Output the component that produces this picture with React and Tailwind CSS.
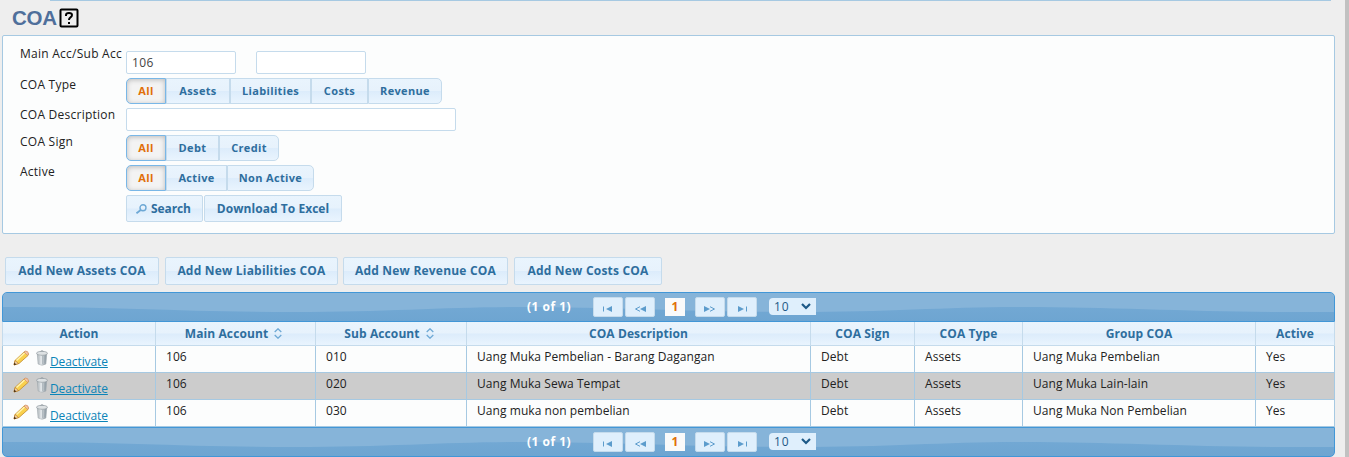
import React from "react";

const FONT = "font-['Open_Sans','Noto_Sans',sans-serif]";
const GLOSS = "bg-[linear-gradient(#e9f4fd_0%,#e7f2fc_49%,#dcecfb_51%,#e9f4fe_100%)]";
const BTN = `${GLOSS} border border-[#c5dbec] text-[#2e6e9e] font-bold`;

const COLUMNS = [
  { label: "Action", width: "w-[153px]" },
  { label: "Main Account", width: "w-[160px]", sortable: true },
  { label: "Sub Account", width: "w-[151px]", sortable: true },
  { label: "COA Description", width: "w-[344px]" },
  { label: "COA Sign", width: "w-[104px]" },
  { label: "COA Type", width: "w-[108px]" },
  { label: "Group COA", width: "w-[233px]" },
  { label: "Active", width: "w-[79px]" },
];

const ROWS = [
  ["106", "010", "Uang Muka Pembelian - Barang Dagangan", "Debt", "Assets", "Uang Muka Pembelian", "Yes"],
  ["106", "020", "Uang Muka Sewa Tempat", "Debt", "Assets", "Uang Muka Lain-lain", "Yes"],
  ["106", "030", "Uang muka non pembelian", "Debt", "Assets", "Uang Muka Non Pembelian", "Yes"],
];

const TYPES = [
  { label: "All", width: "w-[40px]" },
  { label: "Assets", width: "w-[64px]" },
  { label: "Liabilities", width: "w-[81px]" },
  { label: "Costs", width: "w-[57px]" },
  { label: "Revenue", width: "w-[74px]" },
];
const SIGNS = [
  { label: "All", width: "w-[40px]" },
  { label: "Debt", width: "w-[53px]" },
  { label: "Credit", width: "w-[60px]" },
];
const STATES = [
  { label: "All", width: "w-[40px]" },
  { label: "Active", width: "w-[61px]" },
  { label: "Non Active", width: "w-[87px]" },
];
const ADD_BUTTONS = [
  { label: "Add New Assets COA", width: "w-[154px]" },
  { label: "Add New Liabilities COA", width: "w-[173px]" },
  { label: "Add New Revenue COA", width: "w-[165px] -ml-px" },
  { label: "Add New Costs COA", width: "w-[148px]" },
];

function SelectOneButton({ options }) {
  return (
    <div className="flex h-[26px]">
      {options.map((o, i) => (
        <button
          key={o.label}
          className={`${o.width} flex items-center justify-center whitespace-nowrap border pt-px text-[11px] font-bold tracking-[0.35px] ${
            i === 0
              ? "rounded-l-[5px] border-[#79b7e7] bg-[#f3f3f3] text-[#e17009] shadow-[inset_0_1px_5px_#bbb]"
              : `${GLOSS} border-[#c5dbec] text-[#2e6e9e]`
          } ${i === options.length - 1 ? "rounded-r-[5px]" : ""}`}
        >
          {o.label}
        </button>
      ))}
    </div>
  );
}

function Field({ label, height, children }) {
  return (
    <div className={`flex ${height}`}>
      <label className="w-[106px] shrink-0 whitespace-nowrap text-[12px] leading-[14px] tracking-[0.25px] text-[#222]">{label}</label>
      {children}
    </div>
  );
}

function PagerButton({ children }) {
  return (
    <button className="flex h-5 w-[30px] items-center justify-center rounded-[2px] border border-[#c5dbec] bg-[#dfeffc] pt-[3px]">
      <svg width="12" height="6" viewBox="0 0 12 6" fill="#5c9ccc" stroke="#5c9ccc">{children}</svg>
    </button>
  );
}

function Paginator({ className }) {
  return (
    <div className={`relative flex h-[30px] items-center overflow-hidden border border-[#4297d7] bg-[linear-gradient(#76abd6,#6ea5d1)] pl-[524px] ${className}`}>
      <svg className="absolute inset-0" width="1331" height="28" viewBox="0 0 1331 28">
        <path fill="#86b4d9" d="M0 0H1331V19H1290C1190 19 1110 14 1020 14C940 14 890 19 790 19C690 19 610 14 520 14C440 14 390 19 290 19C190 19 110 14 20 14H0Z" />
      </svg>
      <div className="relative flex items-center">
        <span className="w-[66px] text-[12px] font-bold tracking-[0.5px] text-white">(1 of 1)</span>
        <div className="flex gap-[2px]">
          <PagerButton><path stroke="none" d="M10 0v6L4 3z" /><path d="M1.500 .5v5" /></PagerButton>
          <PagerButton><path stroke="none" d="M12 0v6L6 3z" /><path fill="none" d="M6 .7L1.500 3 6 5.300" /></PagerButton>
        </div>
        <span className="mx-[10px] flex h-[18px] w-5 items-center justify-center bg-[#fafafa] text-[12px] font-bold text-[#e17009]">1</span>
        <div className="flex gap-[2px]">
          <PagerButton><path stroke="none" d="M0 0v6L6 3z" /><path fill="none" d="M6 .7L10.500 3 6 5.300" /></PagerButton>
          <PagerButton><path stroke="none" d="M2 0v6L8 3z" /><path d="M10.500 .5v5" /></PagerButton>
        </div>
        <div className="ml-3 -mt-px flex h-[17px] w-[47px] items-center justify-between rounded-l-[4px] bg-[#dfeffc] pl-[5px] pr-[5px] text-[12px] font-medium tracking-[0.8px] text-[#1d5987]">
          10
          <svg width="10" height="7" viewBox="0 0 10 7" fill="none" stroke="#1d5987" strokeWidth="2.200"><path d="M1 1l4 4 4-4" /></svg>
        </div>
      </div>
    </div>
  );
}

function Pencil() {
  return (
    <svg width="16" height="16" viewBox="0 0 16 16">
      <path d="M1 15l1-4.500 9-8.500q2-1 3.500.5t.500 3L6 13.500z" fill="#f9d04c" stroke="#c08a2c" strokeWidth=".8" />
      <path d="M3.500 10.500l8-7.500" stroke="#fff3b0" strokeWidth="1.500" />
      <path d="M11 2l3.500 3.500 1-1.500q0-3-3-3z" fill="#f5c3a0" stroke="#cb8c62" strokeWidth=".6" />
      <path d="M2 10.500l3.500 3L1 15z" fill="#f5d6ad" stroke="#b5761f" strokeWidth=".6" />
      <path d="M1.300 12.500l2 2L1 15z" fill="#3d2510" />
    </svg>
  );
}

function Trash() {
  return (
    <svg width="12" height="16" viewBox="0 0 12 16">
      <defs>
        <linearGradient id="metal">
          <stop offset="0" stopColor="#a3abb0" />
          <stop offset=".35" stopColor="#f4f7f8" />
          <stop offset=".65" stopColor="#b9c1c6" />
          <stop offset="1" stopColor="#82909a" />
        </linearGradient>
      </defs>
      <path d="M1.300 4h9.400l-.8 10q-3.900 2.500-7.800 0z" fill="url(#metal)" stroke="#a3abb0" strokeWidth=".6" />
      <path d="M4 6v8M6.500 6v8M9 6l-.5 7" stroke="#98a3aa" strokeWidth=".5" />
      <ellipse cx="6" cy="3.300" rx="5.500" ry="2" fill="#dde1e3" stroke="#929ba1" strokeWidth=".7" />
      <path d="M4.500 1.500q1.500-1.500 3 0" fill="none" stroke="#929ba1" />
    </svg>
  );
}

export default function App() {
  return (
    <div className={`${FONT} flex h-[457px] w-[1349px] overflow-hidden bg-[#eee] text-[#222]`}>
      <div className="w-[1335px] pl-[2px]">
        <div className="ml-12 h-px w-[1281px] bg-[#a6c9e2]" />
        <header className="flex h-[34px] items-center pl-[10px] font-['Liberation_Sans',sans-serif] text-[20.5px] font-bold tracking-[-0.3px] text-[#4f6f9b]">
          COA
          <svg className="ml-[2px]" width="20" height="20" viewBox="0 0 20 20" fill="none" stroke="#000" strokeWidth="2">
            <rect x="1.500" y="1.500" width="17" height="17" rx="1" />
            <path d="M7 8V7q0-2 3-2t3 2q0 1.300-1.500 2.300T10 12M10 14v2" />
          </svg>
        </header>

        <section className="h-[199px] rounded-[2px] border border-[#a6c9e2] bg-[#fcfdfd] pl-[17px] pt-[11px]">
          <Field label="Main Acc/Sub Acc" height="h-[31px]">
            <div className="flex gap-5 pt-1">
              <input className="h-[23px] w-[110px] rounded-[2px] border border-[#c5dbec] bg-white px-[5px] text-[12px] tracking-[0.4px] text-[#444]" defaultValue="106" />
              <input className="h-[23px] w-[110px] rounded-[2px] border border-[#c5dbec] bg-white px-[5px]" />
            </div>
          </Field>
          <Field label="COA Type" height="h-[30px]"><SelectOneButton options={TYPES} /></Field>
          <Field label="COA Description" height="h-[27px]">
            <input className="h-[23px] w-[330px] rounded-[2px] border border-[#c5dbec] bg-white px-[5px]" />
          </Field>
          <Field label="COA Sign" height="h-[30px]"><SelectOneButton options={SIGNS} /></Field>
          <Field label="Active" height="h-[30px]"><SelectOneButton options={STATES} /></Field>
          <div className="ml-[106px] flex gap-px text-[12px]">
            <button className={`${BTN} flex h-[27px] w-[77px] items-center gap-[4px] rounded-[2px] pl-[9px] tracking-[-0.1px]`}>
              <svg className="mt-px" width="11" height="10" viewBox="0 0 11 10" fill="none" stroke="#6da8d5" strokeWidth="1.400"><circle cx="7" cy="3.800" r="3" /><path d="M4.700 6L.500 9.300" strokeWidth="1.800" /></svg>
              Search
            </button>
            <button className={`${BTN} h-[27px] w-[138px] rounded-[2px] tracking-[0.05px]`}>Download To Excel</button>
          </div>
        </section>

        <div className="ml-[3px] mt-[23px] flex gap-[6px] text-[12px]">
          {ADD_BUTTONS.map((b) => (
            <button key={b.label} className={`${BTN} ${b.width} h-7 whitespace-nowrap rounded-[2px] tracking-[0.2px]`}>{b.label}</button>
          ))}
        </div>

        <div className="mt-[7px]">
          <Paginator className="rounded-t-[5px]" />
          <div className={`${GLOSS} flex h-6 border-b border-l border-[#c5dbec] text-[12px] font-bold tracking-[0.1px] text-[#2e6e9e]`}>
            {COLUMNS.map((c) => (
              <div key={c.label} className={`${c.width} flex shrink-0 items-center justify-center gap-[6px] border-r border-[#c5dbec]`}>
                {c.label}
                {c.sortable && (
                  <svg className="mr-1" width="8" height="11" viewBox="0 0 8 11" fill="none" stroke="#6da8d5" strokeWidth="1.300"><path d="M.7 4L4 .8 7.300 4M.7 7L4 10.200 7.300 7" /></svg>
                )}
              </div>
            ))}
          </div>
          {ROWS.map((row, r) => (
            <div key={row[1]} className={`flex h-[27px] border-b border-l border-[#a6c9e2] text-[12px] ${r === 1 ? "bg-[#ccc]" : "bg-[#fcfdfd]"}`}>
              <div className="flex w-[153px] shrink-0 border-r border-[#a6c9e2] pl-[10px] pt-1">
                <Pencil />
                <span className="ml-[7px]"><Trash /></span>
                <a href="#" className="mt-[4px] ml-[2px] leading-[15px] tracking-[-0.1px] text-[#0b84b8] underline">Deactivate</a>
              </div>
              {row.map((cell, i) => (
                <div key={i} className={`${COLUMNS[i + 1].width} shrink-0 whitespace-nowrap border-r border-[#a6c9e2] pl-[10px] pt-[3px] leading-4 tracking-[0.06px]`}>{cell}</div>
              ))}
            </div>
          ))}
          <Paginator className="rounded-b-[5px]" />
        </div>
      </div>
      <div className="ml-auto w-1 bg-[#c1c1c1]" />
    </div>
  );
}
